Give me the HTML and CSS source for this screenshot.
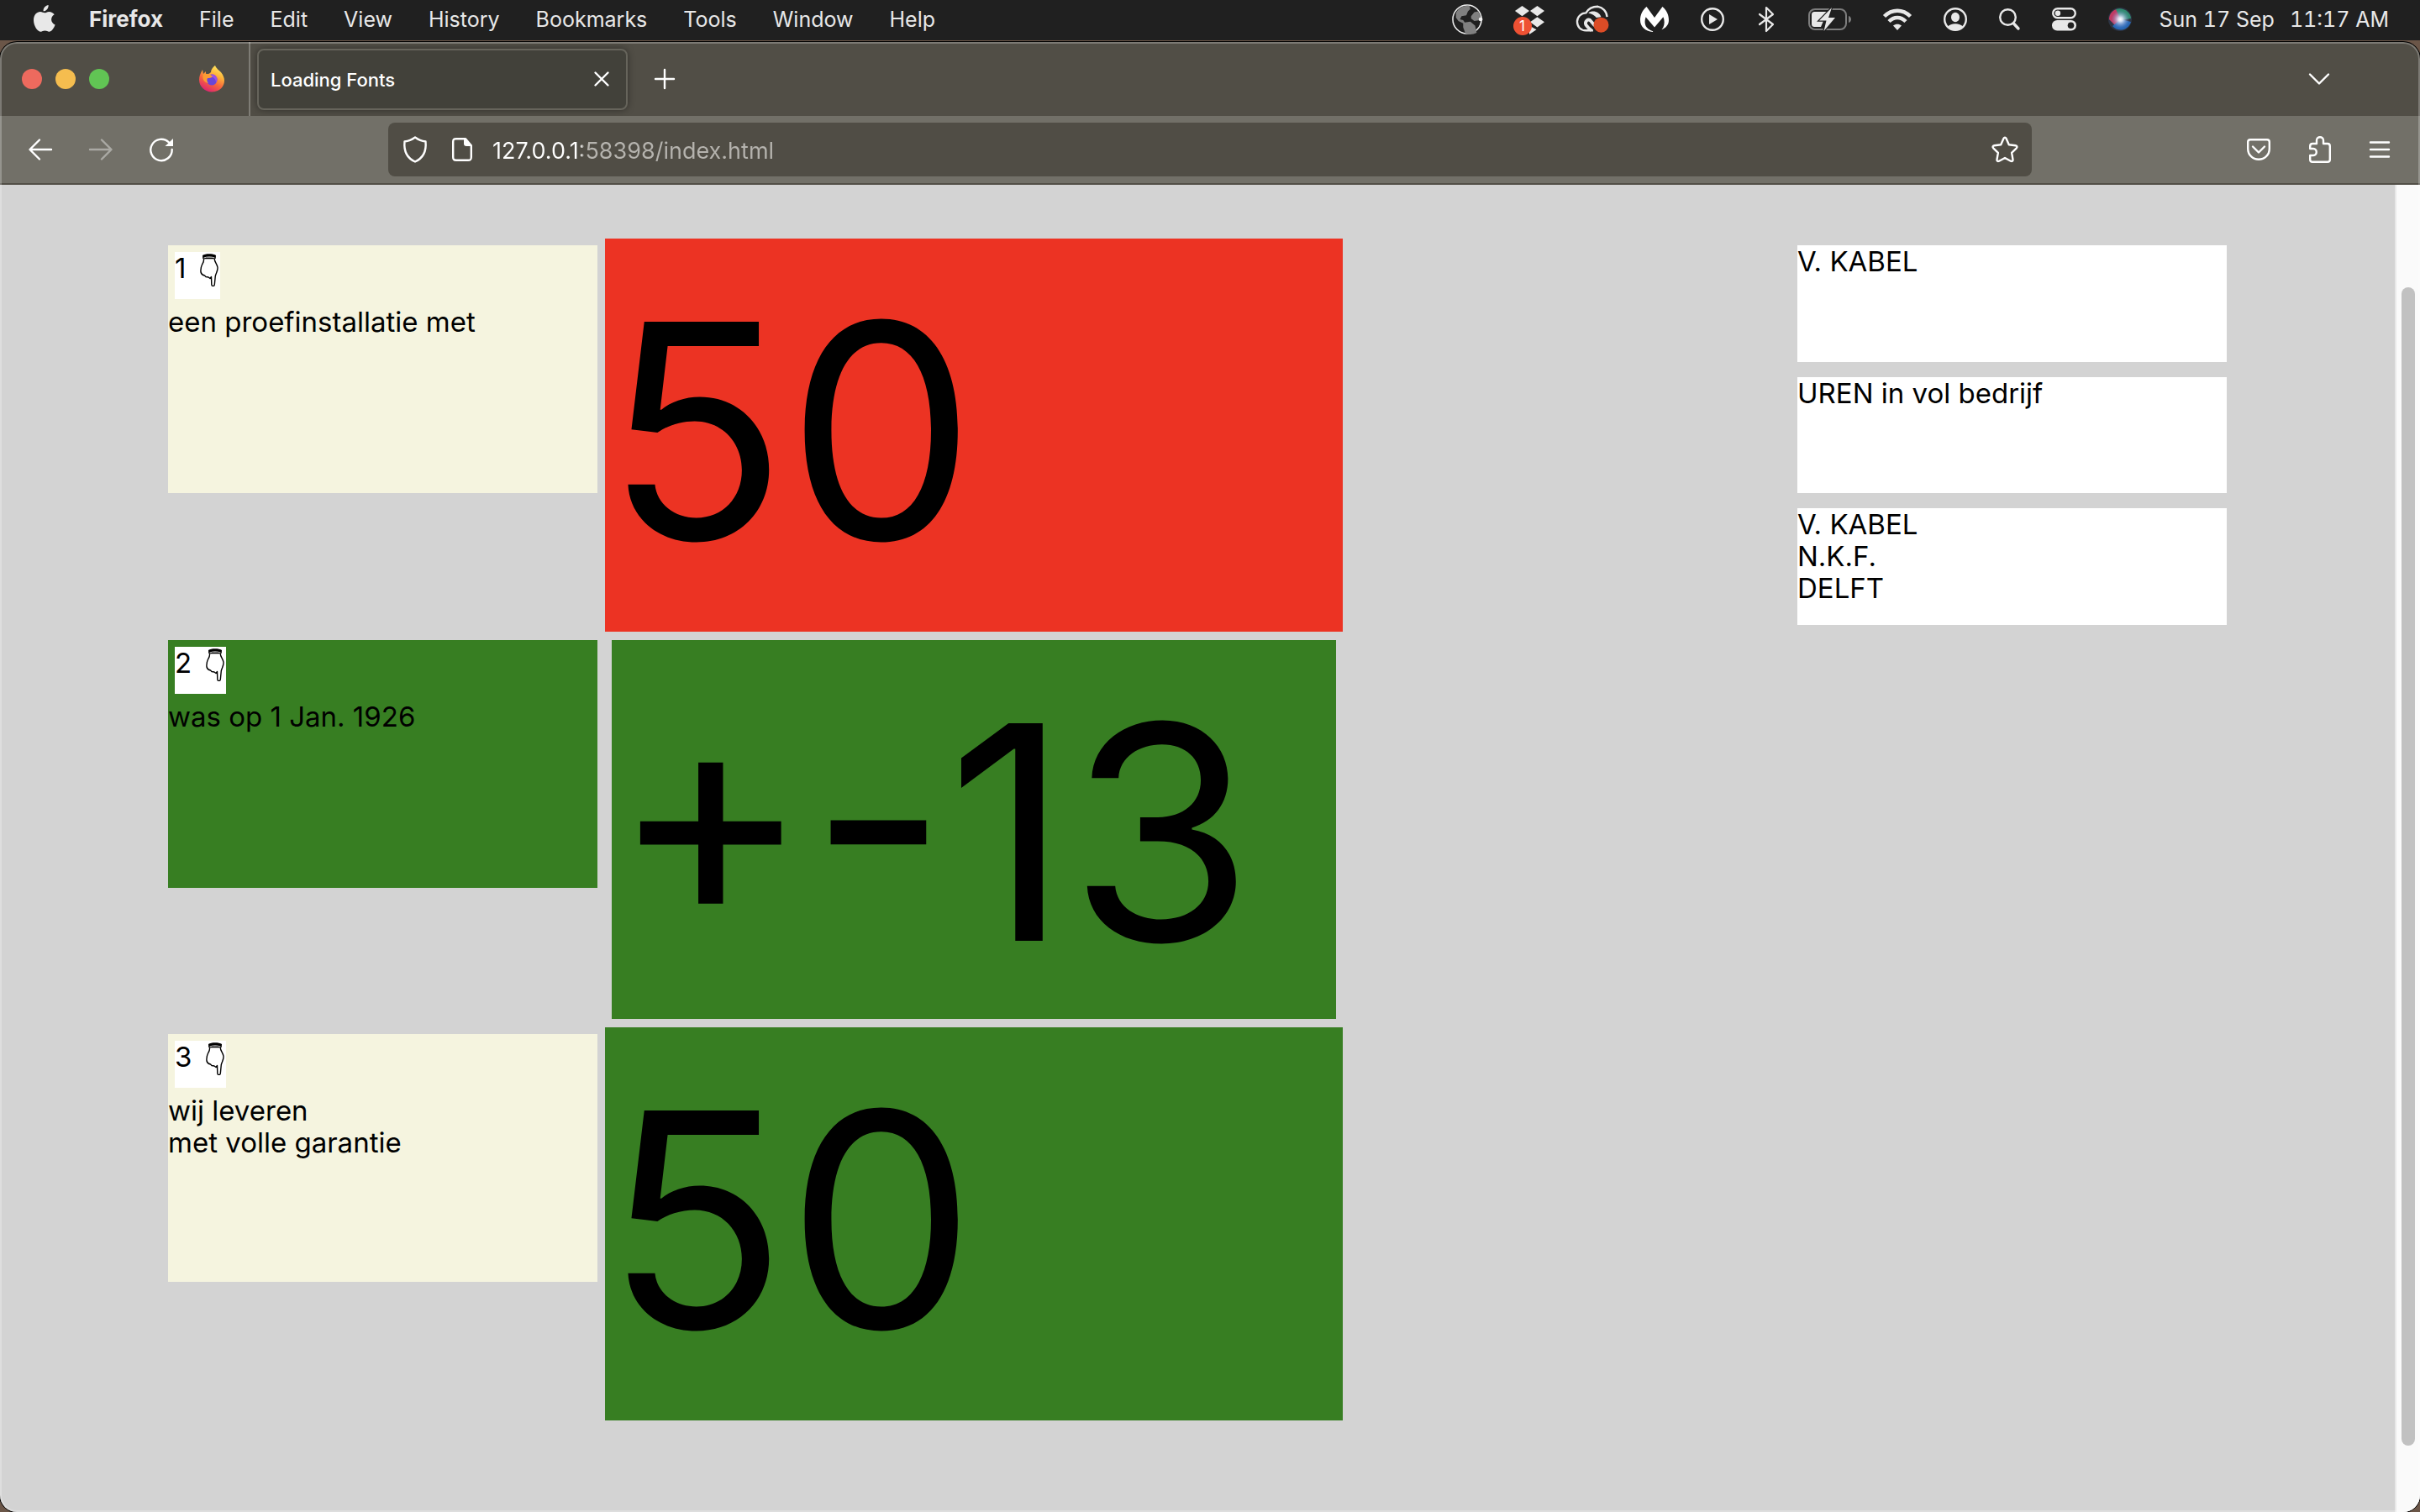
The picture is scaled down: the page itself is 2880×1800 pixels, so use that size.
FILE: index.html
```html
<!DOCTYPE html>
<html lang="nl">
<head>
<meta charset="utf-8">
<title>Loading Fonts</title>
<link rel="stylesheet" href="styles.css">
</head>
<body>
<header class="menubar">
  <nav class="menus" aria-label="Menu bar">
    <button class="menu apple" aria-label="Apple">
      <svg width="26" height="32" viewBox="0 0 26 32"><path fill="currentColor" d="M17.6 0c.3 2-.5 3.900-1.700 5.300-1.200 1.400-2.700 2.200-4.300 2-.2-1.900.6-3.700 1.700-5C14.400 1 16.200.1 17.600 0zM13.200 9.300c1.200 0 2.900-1.400 5.200-1.400 2.500 0 4.900 1.300 6.300 3.300-5.400 3.200-4.400 10 .9 12.200-1.400 3.800-4 8.300-7.200 8.300-1.800 0-2.500-1.200-4.900-1.200s-3.200 1.200-4.900 1.200C4.600 31.700 0 24.600 0 17.900 0 11.600 4 8 7.900 8c2.300 0 3.900 1.300 5.300 1.300z"/></svg>
    </button>
    <button class="menu app">Firefox</button>
    <button class="menu">File</button>
    <button class="menu">Edit</button>
    <button class="menu">View</button>
    <button class="menu">History</button>
    <button class="menu">Bookmarks</button>
    <button class="menu">Tools</button>
    <button class="menu">Window</button>
    <button class="menu">Help</button>
  </nav>
  <div class="status">
    <svg width="36" height="38" viewBox="0 0 38 40"><circle cx="19" cy="20" r="18" fill="#202020" stroke="#f0f0f0" stroke-width="1.600"/><path fill="#808080" d="M5 12C8 6 14 2.500 22 3l1 4-3 3-2 5-6 1-2 4 4 1 2 3 7-1 6 5 2 9c-4 2-9 3-14 1l-3-8v-5L8 22 5 18zM24 16l4-5 5-1 3 7-1 4-7 1-4-3z"/><circle cx="36" cy="20" r="2.500" fill="#f0f0f0"/></svg>
    <span class="notified">
      <svg width="36" height="34" viewBox="0 0 38 34"><path fill="#e8e8e8" d="M10 0l9 6.500-9 6.500-9-6.500zM29 0l9 6.500-9 6.500-9-6.500zM10 14l9 6.500-9 6.500-9-6.500zM29 14l9 6.500-9 6.500-9-6.500zM19 25l9 5-9 6z"/></svg>
      <span class="count">1</span>
    </span>
    <svg width="38" height="34" viewBox="0 0 40 34"><g fill="none" stroke="#e8e8e8" stroke-width="2.500"><path d="M21 31H12C5 31 1 26 1 20c0-6 5-11 11-11 4-7 11-8 15-8 6 1 11 6 11.500 13"/><path d="M19 31c-4-3-5-4-7-7-2-4 3-9 6-5l5 6" stroke-width="4"/></g><path fill="#e8e8e8" d="M15 9c5-4 14-2 16 5l-6 1c-2-3-5-5-10-6z"/><circle cx="31" cy="24" r="9.500" fill="#dc4c26"/></svg>
    <svg width="34" height="32" viewBox="0 0 36 32"><path fill="#fff" d="M8 0l10 14L28 0c5 4 8 10 8 17 0 6-4 10-9 12 3-3 4-8 3-13l-1-3-11 13L7 13c-3 9 0 15 9 18v1C6 31 0 25 0 17 0 10 3 4 8 0z"/></svg>
    <svg width="28" height="28" viewBox="0 0 28 28"><circle cx="14" cy="14" r="12.800" fill="none" stroke="#e8e8e8" stroke-width="2.400"/><path fill="#e8e8e8" d="M10 8l10 6-10 6z"/></svg>
    <svg width="24" height="30" viewBox="0 0 24 30"><path fill="none" stroke="#e8e8e8" stroke-width="2.200" stroke-linejoin="round" stroke-linecap="round" d="M4 9l16 12-8 8V1l8 8L4 21"/></svg>
    <svg width="51" height="28" viewBox="0 0 51 28"><rect x="1" y="2" width="44" height="24" rx="7" fill="none" stroke="#7d7d7d" stroke-width="2"/><path fill="#7d7d7d" d="M48 10c4 1 4 7 0 8z"/><path fill="#e8e8e8" d="M8 5h15L12 16h6l-3 7H8c-3 0-4-1-4-4V9c0-3 1-4 4-4z"/><path fill="#e8e8e8" stroke="#202020" stroke-width="2.500" paint-order="stroke" d="M28 0L13 15.500h8.500L18.500 28 32 12h-8z"/></svg>
    <svg width="34" height="26" viewBox="0 0 34 26"><g fill="none" stroke="#e8e8e8" stroke-width="4.500"><path d="M1.500 9.500c9-9 22-9 31 0"/><path d="M7 15.500c6-6 14-6 20 0"/></g><path fill="#e8e8e8" d="M17 26l-5-5.500c3-2.500 7-2.500 10 0z"/></svg>
    <svg width="28" height="28" viewBox="0 0 28 28"><circle cx="14" cy="14" r="12.800" fill="none" stroke="#e8e8e8" stroke-width="2.400"/><ellipse cx="14" cy="11.500" rx="5" ry="5.700" fill="#e8e8e8"/><path fill="#e8e8e8" d="M5 23c3-5 15-5 18 0-5 5-13 5-18 0z"/></svg>
    <svg width="25" height="26" viewBox="0 0 25 26"><circle cx="10.500" cy="10.500" r="9.300" fill="none" stroke="#e8e8e8" stroke-width="2.400"/><path stroke="#e8e8e8" stroke-width="3.400" stroke-linecap="round" d="M17.500 18l5.500 6"/></svg>
    <svg width="29" height="28" viewBox="0 0 29 28"><rect x="1.200" y="1.200" width="26.600" height="11" rx="5.500" fill="none" stroke="#e8e8e8" stroke-width="2.400"/><circle cx="7" cy="6.700" r="3.200" fill="#e8e8e8"/><rect y="15" width="29" height="12.500" rx="6.200" fill="#e8e8e8"/><circle cx="22.500" cy="21.200" r="3.800" fill="#202020"/></svg>
    <svg width="28" height="28" viewBox="0 0 28 28"><defs><radialGradient id="siri"><stop offset="0" stop-color="#fff"/><stop offset=".25" stop-color="#e2eafa" stop-opacity=".9"/><stop offset="1" stop-color="#7090d0" stop-opacity="0"/></radialGradient></defs><circle cx="14" cy="14" r="14" fill="#2c3444"/><path fill="#c13a62" d="M1 14C1 8 5 3 10 2l5 12-7 7z"/><path fill="#318a70" d="M9 2c8-3 18 3 18 11l-12 2z"/><path fill="#2766b4" d="M5 22l10-8 12 3c-3 10-15 13-22 5z"/><circle cx="14.500" cy="14" r="11" fill="url(#siri)"/></svg>
    <time class="clock"><span>Sun 17 Sep</span><span>11:17 AM</span></time>
  </div>
</header>

<div class="window">
  <div class="tabstrip">
    <div class="pinned">
      <div class="lights">
        <button class="light close" aria-label="Close window"></button>
        <button class="light minimise" aria-label="Minimise window"></button>
        <button class="light zoom" aria-label="Zoom window"></button>
      </div>
      <svg width="30" height="32" viewBox="0 0 30 32">
        <defs><linearGradient id="fox" x1=".85" y1="0" x2=".35" y2="1"><stop offset="0" stop-color="#fff36a"/><stop offset=".35" stop-color="#fdb53a"/><stop offset=".65" stop-color="#f8663c"/><stop offset="1" stop-color="#dc2470"/></linearGradient></defs>
        <path fill="url(#fox)" d="M19 0c1 3 5 6 7 8 3 4 4 7 4 10 0 8-7 13.500-15 13.500S0 25 0 17c0-4 1-7 4-12l1 5 3-3v4c2-1 4-1 6-3 0-3 2-6 5-8z"/>
        <circle cx="15" cy="17" r="6.500" fill="#6a46d8"/><path fill="#9a50e6" d="M15 10.500c6 0 8 6 5 10 0-4-2-6-5-7z"/>
        <path fill="#fc9c33" d="M5 10c3-1 9 0 11 3-2 2-4 2-6 2-1 2-1 4 1 6-5-1-8-5-6-11z"/>
      </svg>
    </div>
    <div class="tab">
      <span class="tab-title">Loading Fonts</span>
      <button class="icon" aria-label="Close tab"><svg width="18" height="18" viewBox="0 0 18 18"><path class="line" d="M1.500 1.500l15 15m0-15l-15 15"/></svg></button>
    </div>
    <button class="icon new-tab" aria-label="New tab"><svg width="24" height="24" viewBox="0 0 24 24"><path class="line" d="M12 1v22M1 12h22"/></svg></button>
    <button class="icon all-tabs" aria-label="List all tabs"><svg width="26" height="14" viewBox="0 0 26 14"><path class="line" d="M2 1.500l11 11 11-11"/></svg></button>
  </div>

  <div class="toolbar">
    <div class="history">
      <button class="icon" aria-label="Back"><svg width="28" height="26" viewBox="0 0 28 26"><path class="line" d="M27 13H2M13 1.500L1.500 13 13 24.500"/></svg></button>
      <button class="icon dim" aria-label="Forward"><svg width="28" height="26" viewBox="0 0 28 26"><path class="line" d="M1 13h25M15 1.500L26.500 13 15 24.500"/></svg></button>
      <button class="icon" aria-label="Reload"><svg width="28" height="28" viewBox="0 0 28 28"><path class="line" d="M26.700 14A12.700 12.700 0 1 1 23 5.500"/><path fill="currentColor" d="M28 1v9H18.500z"/></svg></button>
    </div>
    <form class="urlbar">
      <svg width="32" height="32" viewBox="0 0 30 32"><path class="line" d="M15 1.500c4 3 8 4.500 12.500 5C28.500 17 25 26 15 30.500 5 26 1.500 17 2.500 6.500 7 6 11 4.500 15 1.500z"/></svg>
      <svg width="24" height="28" viewBox="0 0 24 28"><path class="line" d="M5 1.200h11l6.800 8V23c0 3-1 3.800-3.800 3.800H5c-3 0-3.800-1-3.800-3.800V5c0-3 1-3.800 3.800-3.800z"/><path fill="currentColor" d="M14 1h2.500l6.500 8v1h-6c-2 0-3-1-3-3z"/></svg>
      <input class="address" type="text" aria-label="Address" value="127.0.0.1:58398/index.html">
      <button type="button" class="icon" aria-label="Bookmark this page"><svg width="32" height="32" viewBox="0 0 32 32"><path class="line" d="M14.500 2.800c.7-1.400 2.300-1.400 3 0l3.300 7.400 7.900 1c1.800.3 2.300 1.800 1.100 3.100l-5.700 5.600 1.400 8c.3 1.800-1.100 2.600-2.600 1.800L16 26l-6.900 3.700c-1.500.8-2.900 0-2.600-1.800l1.400-8-5.700-5.600c-1.200-1.300-.7-2.800 1.100-3.100l7.900-1z"/></svg></button>
    </form>
    <div class="tools">
      <button class="icon" aria-label="Save to Pocket"><svg width="28" height="26" viewBox="0 0 28 26"><path class="line" d="M4 1.200h20c2 0 2.800 1 2.800 2.800v8c0 7.500-5.800 12.800-12.800 12.800S1.200 19.500 1.200 12V4c0-1.800.8-2.800 2.800-2.800z"/><path class="line" d="M7 9.500l7 7 7-7"/></svg></button>
      <button class="icon" aria-label="Extensions"><svg width="26" height="32" viewBox="0 0 26 32"><path class="line" d="M1.200 12.500V12c0-2 1-3 3-3H9V5c0-5 8-5 8 0v4h5c2 0 2.800 1 2.800 3v16c0 2-1 2.800-2.800 2.800H4c-2 0-2.800-1-2.800-2.800v-5H5c5 0 5-8 0-8H1.200z"/></svg></button>
      <button class="icon" aria-label="Application menu"><svg width="24" height="20" viewBox="0 0 24 20"><path class="line" d="M1 1.500h22M1 10h22M1 18.500h22"/></svg></button>
    </div>
  </div>

  <div class="viewport">
    <main class="board">
      <article class="card cream">
        <div class="marker">1 <svg width="22" height="39" viewBox="0 0 22 39"><use href="#hand"/></svg></div>
        <p>een proefinstallatie met</p>
      </article>
      <div class="figure red raised">50</div>
      <aside class="note">V. KABEL</aside>
      <aside class="note">UREN in vol bedrijf</aside>
      <aside class="note">V. KABEL<br>N.K.F.<br>DELFT</aside>

      <article class="card green">
        <div class="marker">2 <svg width="22" height="39" viewBox="0 0 22 39"><use href="#hand"/></svg></div>
        <p>was op 1 Jan. 1926</p>
      </article>
      <div class="figure green">+-13</div>

      <article class="card cream">
        <div class="marker">3 <svg width="22" height="39" viewBox="0 0 22 39"><use href="#hand"/></svg></div>
        <p>wij leveren<br>met volle garantie</p>
      </article>
      <div class="figure green raised">50</div>
    </main>
    <div class="scrollbar"><div class="thumb"></div></div>
  </div>
</div>

<svg class="symbols" aria-hidden="true"><symbol id="hand" viewBox="0 0 22 39"><path fill="#fff" stroke="#000" stroke-width="1.400" stroke-linejoin="round" d="M4.500 5.500c.5 4-.5 5-2 7.500C1 16 .700 19 1 22c.5 2 2 3.500 4.500 4l1.500 1.500 3 .5 2 1.500 1.500-2 .3 9.500c.3 2 3.200 2 3.500 0l1-10.500c1-4 3-6 2.700-10C20.500 12 17 10 17.200 5.500z"/><path d="M3 2c3-2.500 13-2.500 16 0l-.3 4c-5-2-10.500-2-15.500 0z"/><path fill="none" stroke="#fff" stroke-width=".8" d="M4.500 5c4-1.500 9-1.500 13 0"/></symbol></svg>
</body>
</html>
```
FILE: styles.css
```css
* {
  box-sizing: border-box;
}

body {
  margin: 0;
  min-height: 100vh;
  display: flex;
  flex-direction: column;
  background: #6b5648;
  color: #000;
  font-family: Inter, "Liberation Sans", sans-serif;
}

button,
input {
  margin: 0;
  padding: 0;
  border: 0;
  background: none;
  color: inherit;
  font: inherit;
}

p {
  margin: 0;
}

svg {
  display: block;
  flex: none;
  overflow: visible;
}

.symbols {
  position: absolute;
  width: 0;
  height: 0;
}

.line {
  fill: none;
  stroke: currentColor;
  stroke-width: 2.4;
  stroke-linecap: round;
  stroke-linejoin: round;
}

/* System menu bar */

.menubar {
  display: flex;
  justify-content: space-between;
  align-items: center;
  height: 48px;
  margin-bottom: 2px;
  padding: 0 37px 2px 40px;
  background: #202020;
  color: #e8e8e8;
  font-size: 25px;
  line-height: 32px;
}

.menus,
.status,
.clock {
  display: flex;
  align-items: center;
  white-space: nowrap;
}

.menus {
  gap: 43px;
}

.app {
  font-size: 26px;
  font-weight: 700;
}

.apple {
  margin: -2px -3px 0 0;
}

.status {
  gap: 38px;
}

.clock {
  gap: 18px;
  margin-left: -5px;
  font-variant-numeric: tabular-nums;
}

.notified {
  position: relative;
}

.count {
  position: absolute;
  left: -1px;
  top: 14px;
  width: 22px;
  height: 22px;
  border-radius: 50%;
  background: #ee5133;
  color: #fff;
  font-size: 17px;
  line-height: 22px;
  text-align: center;
}

/* Browser window */

.window {
  position: relative;
  flex: 1;
  display: flex;
  flex-direction: column;
  overflow: hidden;
  border-radius: 20px;
  background: #514e46;
  color: #fff;
  box-shadow: 0 0 0 1px #000;
}

.window::after {
  content: "";
  position: absolute;
  inset: 0;
  border-radius: 20px;
  box-shadow: inset 0 0 0 2px rgba(255, 255, 255, 0.25);
  pointer-events: none;
}

.tabstrip {
  display: flex;
  align-items: center;
  height: 88px;
}

.pinned {
  display: flex;
  justify-content: space-between;
  align-items: center;
  align-self: stretch;
  width: 298px;
  padding: 0 29px 0 26px;
  border-right: 2px solid #7f7d76;
}

.lights {
  display: flex;
  gap: 16px;
}

.light {
  width: 24px;
  height: 24px;
  border-radius: 50%;
}

.close {
  background: #ed6a5e;
}

.minimise {
  background: #f5bd4f;
}

.zoom {
  background: #61c454;
}

.tab {
  display: flex;
  justify-content: space-between;
  align-items: center;
  width: 441px;
  height: 73px;
  margin-left: 8px;
  padding: 0 20px 0 14px;
  border: 2px solid #66645b;
  border-radius: 8px;
  background: #42413a;
  box-shadow: 0 0 8px rgba(0, 0, 0, 0.4);
  font-size: 22px;
  font-weight: 500;
  line-height: 28px;
}

.tab-title {
  padding-top: 2px;
}

.icon {
  display: flex;
}

.new-tab {
  margin-left: 32px;
}

.all-tabs {
  margin: 0 107px 0 auto;
}

.toolbar {
  display: flex;
  align-items: center;
  height: 82px;
  border-bottom: 2px solid #514e46;
  background: #727068;
}

.history,
.tools {
  display: flex;
  align-items: center;
}

.history {
  gap: 44px;
  width: 462px;
  padding-left: 34px;
}

.tools {
  justify-content: flex-end;
  gap: 46px;
  width: 462px;
  padding-right: 36px;
}

.dim {
  opacity: 0.4;
}

.urlbar {
  flex: 1;
  display: flex;
  align-items: center;
  height: 64px;
  padding: 0 16px;
  border-radius: 8px;
  background: #504d45;
}

.urlbar > svg:nth-child(2) {
  margin: 0 24px 0 28px;
}

.address {
  flex: 1;
  height: 42px;
  padding-top: 2px;
  background: linear-gradient(to right, #fff 106px, #b5b3ae 106px);
  background-clip: text;
  -webkit-text-fill-color: transparent;
  font-size: 27px;
  line-height: 40px;
}

/* Page */

.viewport {
  flex: 1;
  display: flex;
  background: #d3d3d3;
  color: #000;
}

.board {
  flex: 1;
  display: grid;
  grid-template-columns: 511fr 862fr 515fr 511fr;
  grid-template-rows: repeat(9, minmax(0, 1fr));
  gap: 18px 17px;
  padding: 72px 200px 117px;
  font-size: 33px;
  line-height: 38px;
}

.card {
  grid-column: 1;
}

.card:nth-of-type(1) {
  grid-row: 1 / span 2;
}

.card:nth-of-type(2) {
  grid-row: 4 / span 2;
}

.card:nth-of-type(3) {
  grid-row: 7 / span 2;
}

.figure {
  grid-column: 2;
  grid-row: span 3;
  padding-top: 12px;
  font-size: 356px;
  line-height: 434px;
  white-space: nowrap;
}

/* Raised figures spread over the gap around their cell */
.raised {
  margin: -8px;
}

.note {
  grid-column: 4;
  background: #fff;
}

.cream {
  background: #f5f4df;
}

.green {
  background: #377e22;
}

.red {
  background: #ec3323;
}

.marker {
  display: flex;
  gap: 17px;
  width: fit-content;
  height: 56px;
  margin: 8px;
  padding-right: 2px;
  background: #fff;
}

.marker svg {
  margin-top: 2px;
}

.scrollbar {
  display: flex;
  width: 30px;
  padding: 122px 6px 79px;
  border-left: 2px solid #e8e8e8;
  background: #fafafa;
}

.thumb {
  width: 16px;
  border-radius: 8px;
  background: #c1c1c1;
}
```
